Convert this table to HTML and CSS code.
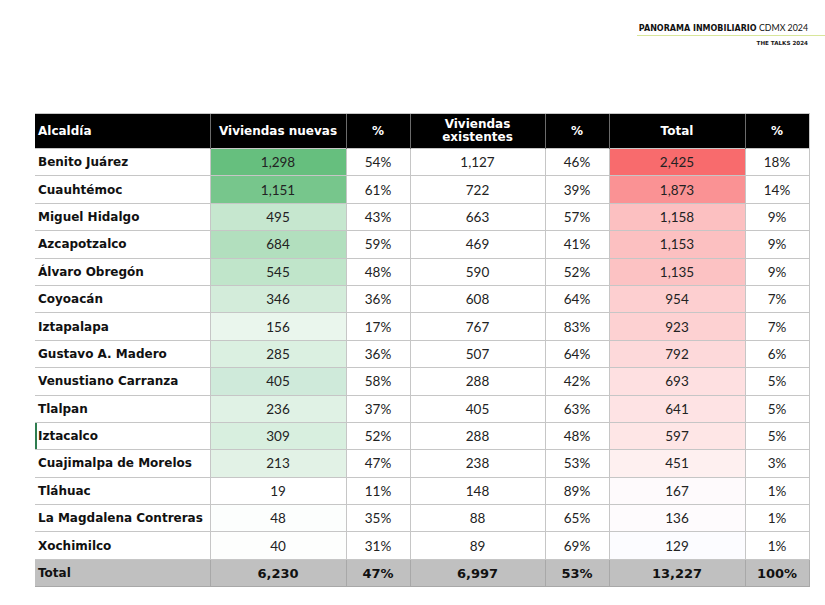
FILE: index.html
```html
<!DOCTYPE html>
<html lang="es">
<head>
<meta charset="utf-8">
<title>Panorama Inmobiliario CDMX 2024</title>
<link rel="stylesheet" href="styles.css">
</head>
<body>
<header class="brand">
  <div class="brand-title"><b>PANORAMA INMOBILIARIO</b> CDMX 2024</div>
  <div class="brand-rule"></div>
  <div class="brand-sub">THE TALKS 2024</div>
</header>
<main class="wrap">
<table class="data">
  <colgroup>
    <col class="c-name"><col class="c-num"><col class="c-pct"><col class="c-num2"><col class="c-pct"><col class="c-num"><col class="c-pct">
  </colgroup>
  <thead>
    <tr>
      <th class="left">Alcaldía</th>
      <th>Viviendas nuevas</th>
      <th>%</th>
      <th class="two">Viviendas<br>existentes</th>
      <th>%</th>
      <th>Total</th>
      <th>%</th>
    </tr>
  </thead>
  <tbody>
    <tr><td class="name">Benito Juárez</td><td style="background:#66bf7e">1,298</td><td>54%</td><td>1,127</td><td>46%</td><td style="background:#f86b6d">2,425</td><td>18%</td></tr>
    <tr><td class="name">Cuauhtémoc</td><td style="background:#77c68c">1,151</td><td>61%</td><td>722</td><td>39%</td><td style="background:#fa9294">1,873</td><td>14%</td></tr>
    <tr><td class="name">Miguel Hidalgo</td><td style="background:#c6e7cf">495</td><td>43%</td><td>663</td><td>57%</td><td style="background:#fcc0c1">1,158</td><td>9%</td></tr>
    <tr><td class="name">Azcapotzalco</td><td style="background:#b2dfbe">684</td><td>59%</td><td>469</td><td>41%</td><td style="background:#fcc0c1">1,153</td><td>9%</td></tr>
    <tr><td class="name">Álvaro Obregón</td><td style="background:#c0e5ca">545</td><td>48%</td><td>590</td><td>52%</td><td style="background:#fcc2c3">1,135</td><td>9%</td></tr>
    <tr><td class="name">Coyoacán</td><td style="background:#d3ecda">346</td><td>36%</td><td>608</td><td>64%</td><td style="background:#fdcfd0">954</td><td>7%</td></tr>
    <tr><td class="name">Iztapalapa</td><td style="background:#eaf6ed">156</td><td>17%</td><td>767</td><td>83%</td><td style="background:#fdd1d2">923</td><td>7%</td></tr>
    <tr><td class="name">Gustavo A. Madero</td><td style="background:#dbf0e1">285</td><td>36%</td><td>507</td><td>64%</td><td style="background:#fdd9da">792</td><td>6%</td></tr>
    <tr><td class="name">Venustiano Carranza</td><td style="background:#cfeada">405</td><td>58%</td><td>288</td><td>42%</td><td style="background:#fee0e1">693</td><td>5%</td></tr>
    <tr><td class="name">Tlalpan</td><td style="background:#e0f2e5">236</td><td>37%</td><td>405</td><td>63%</td><td style="background:#fee3e4">641</td><td>5%</td></tr>
    <tr class="mark"><td class="name">Iztacalco</td><td style="background:#d8efdf">309</td><td>52%</td><td>288</td><td>48%</td><td style="background:#fee6e6">597</td><td>5%</td></tr>
    <tr><td class="name">Cuajimalpa de Morelos</td><td style="background:#e2f2e6">213</td><td>47%</td><td>238</td><td>53%</td><td style="background:#fef0f0">451</td><td>3%</td></tr>
    <tr><td class="name">Tláhuac</td><td style="background:#ffffff">19</td><td>11%</td><td>148</td><td>89%</td><td style="background:#fefafc">167</td><td>1%</td></tr>
    <tr><td class="name">La Magdalena Contreras</td><td style="background:#fcfefd">48</td><td>35%</td><td>88</td><td>65%</td><td style="background:#fefbfd">136</td><td>1%</td></tr>
    <tr><td class="name">Xochimilco</td><td style="background:#fdfefd">40</td><td>31%</td><td>89</td><td>69%</td><td style="background:#fcfcff">129</td><td>1%</td></tr>
  </tbody>
  <tfoot>
    <tr><td class="name">Total</td><td>6,230</td><td>47%</td><td>6,997</td><td>53%</td><td>13,227</td><td>100%</td></tr>
  </tfoot>
</table>
</main>
</body>
</html>
```

FILE: styles.css
```css
html, body {
  margin: 0;
  padding: 0;
  background: #ffffff;
}
body {
  width: 825px;
  height: 605px;
  overflow: hidden;
  font-family: "Lato", "DejaVu Sans", sans-serif;
  color: #1a1a1a;
}
.brand {
  display: flex;
  flex-direction: column;
  align-items: flex-end;
  padding: 22px 17px 0 0;
  height: 93px;
  box-sizing: border-box;
}
.brand-title {
  font-size: 8.8px;
  color: #111;
  line-height: 11px;
}
.brand-title b {
  font-family: "DejaVu Sans", sans-serif;
  font-weight: 700;
  font-size: 8px;
}
.brand-rule {
  width: 188px;
  height: 1px;
  background: #d8e69a;
  margin: 1px -17px 0 0;
}
.brand-sub {
  font-family: "DejaVu Sans", sans-serif;
  font-size: 5.6px;
  font-weight: 700;
  margin-top: 3px;
  line-height: 8px;
}
.wrap {
  padding: 20px 0 0 35px;
}
.data {
  border-collapse: collapse;
  table-layout: fixed;
  width: 774px;
  font-size: 13px;
}
.c-name { width: 175px; }
.c-num { width: 136px; }
.c-num2 { width: 135px; }
.c-pct { width: 64px; }
.data th {
  background: #000;
  color: #fff;
  font-family: "DejaVu Sans", sans-serif;
  font-weight: 700;
  font-size: 12px;
  height: 34px;
  padding: 0;
  text-align: center;
  border-left: 1px solid #6b6b6b;
  border-top: 1px solid #c8c8c8;
  line-height: 13px;
}
.data th.left {
  text-align: left;
  padding-left: 3px;
  border-left: 0;
}
.data th:last-child {
  border-right: 1px solid #c8c8c8;
}
.data td {
  height: 26.4px;
  padding: 0;
  text-align: center;
  border: 1px solid #c6c6c6;
  color: #222;
  font-weight: 400;
  font-size: 13.5px;
}
.data td.name {
  text-align: left;
  padding-left: 3px;
  font-family: "DejaVu Sans", sans-serif;
  font-weight: 700;
  font-size: 12px;
  color: #111;
  border-left: 0;
}
.data tr.mark td.name {
  box-shadow: inset 2px 0 0 #2e7d4f;
}
.data tfoot td {
  background: #c0c0c0;
  font-family: "DejaVu Sans", sans-serif;
  font-weight: 700;
  font-size: 13px;
  color: #111;
  border-color: #a8a8a8;
}
```
